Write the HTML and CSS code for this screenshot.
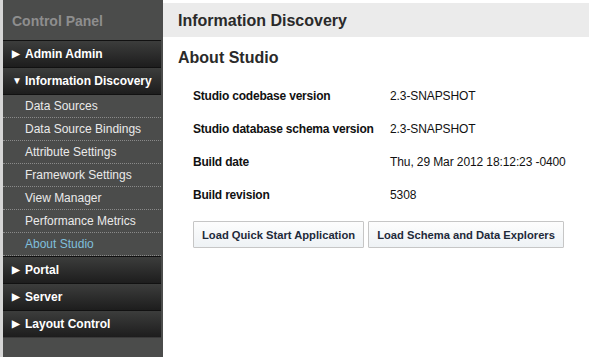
FILE: index.html
```html
<!DOCTYPE html>
<html lang="en">
<head>
  <meta charset="UTF-8">
  <title>Control Panel – About Studio</title>
  <link rel="stylesheet" href="styles.css">
</head>
<body>

  <div class="sidebar">
    <div class="panel-title">Control Panel</div>

    <div class="menu-head"><span class="arrow">&#9654;</span>Admin Admin</div>
    <div class="menu-head"><span class="arrow">&#9660;</span>Information Discovery</div>
    <ul class="submenu">
      <li>Data Sources</li>
      <li>Data Source Bindings</li>
      <li>Attribute Settings</li>
      <li>Framework Settings</li>
      <li>View Manager</li>
      <li>Performance Metrics</li>
      <li class="active">About Studio</li>
    </ul>
    <div class="menu-head"><span class="arrow">&#9654;</span>Portal</div>
    <div class="menu-head"><span class="arrow">&#9654;</span>Server</div>
    <div class="menu-head last"><span class="arrow">&#9654;</span>Layout Control</div>
  </div>

  <div class="content">
    <h1 class="section-title">Information Discovery</h1>
    <h2 class="page-title">About Studio</h2>

    <table class="info">
      <tr><th>Studio codebase version</th><td>2.3-SNAPSHOT</td></tr>
      <tr><th>Studio database schema version</th><td>2.3-SNAPSHOT</td></tr>
      <tr><th>Build date</th><td>Thu, 29 Mar 2012 18:12:23 -0400</td></tr>
      <tr><th>Build revision</th><td>5308</td></tr>
    </table>

    <div class="actions">
      <button class="btn">Load Quick Start Application</button>
      <button class="btn">Load Schema and Data Explorers</button>
    </div>
  </div>

</body>
</html>
```

FILE: styles.css
```css
body {
  margin: 0;
  font-family: 'Liberation Sans', Arial, sans-serif;
  font-size: 12px;
  display: flex;
  min-height: 357px;
  background: #fff;
}

.sidebar {
  width: 158px;
  padding-right: 2px;
  border-left: 3px solid #d6d6d6;
  background: #4b4c4b;
}

.panel-title {
  height: 40px;
  line-height: 42px;
  padding-left: 9px;
  font-size: 14px;
  font-weight: bold;
  color: #8e8e8e;
}

.menu-head {
  height: 26px;
  line-height: 27px;
  border-top: 1px solid #111;
  background: linear-gradient(#3c3d3c, #1d1d1d);
  color: #fff;
  font-weight: bold;
  padding-left: 9px;
}

.menu-head.last {
  border-bottom: 1px solid #3a3a3a;
}

.arrow {
  display: inline-block;
  width: 13px;
  font-size: 10px;
  line-height: 10px;
  vertical-align: 1px;
}

.submenu {
  list-style: none;
  margin: 0;
  padding: 0;
  border-top: 1px solid #111;
}

.submenu li {
  height: 22px;
  line-height: 22px;
  padding-left: 22px;
  color: #eaeaea;
  border-bottom: 1px dotted #8a8a8a;
}

.submenu li.active {
  color: #7fbfdc;
}

.content {
  flex: 1;
}

.section-title {
  margin: 3px 0 0;
  height: 34px;
  line-height: 36px;
  padding-left: 15px;
  background: #ebebeb;
  font-size: 16px;
  color: #2a2a2a;
}

.page-title {
  margin: 0;
  padding: 11px 0 0 15px;
  height: 31px;
  line-height: 20px;
  font-size: 16px;
  color: #2a2a2a;
}

.info {
  margin-left: 30px;
  border-collapse: collapse;
  table-layout: fixed;
  color: #111;
}

.info th {
  width: 197px;
  text-align: left;
  padding: 0;
  height: 33px;
  white-space: nowrap;
  letter-spacing: -0.2px;
}

.info td {
  padding: 0;
  height: 33px;
  letter-spacing: -0.1px;
}

.actions {
  display: flex;
  gap: 4px;
  margin: 10px 0 0 30px;
}

.btn {
  height: 27px;
  padding: 0 8px;
  font-family: inherit;
  font-size: 11.2px;
  font-weight: bold;
  color: #1e2a3a;
  background: linear-gradient(#fdfdfd, #eef2f5);
  border: 1px solid #c6c6c6;
  border-radius: 1px;
}
```
